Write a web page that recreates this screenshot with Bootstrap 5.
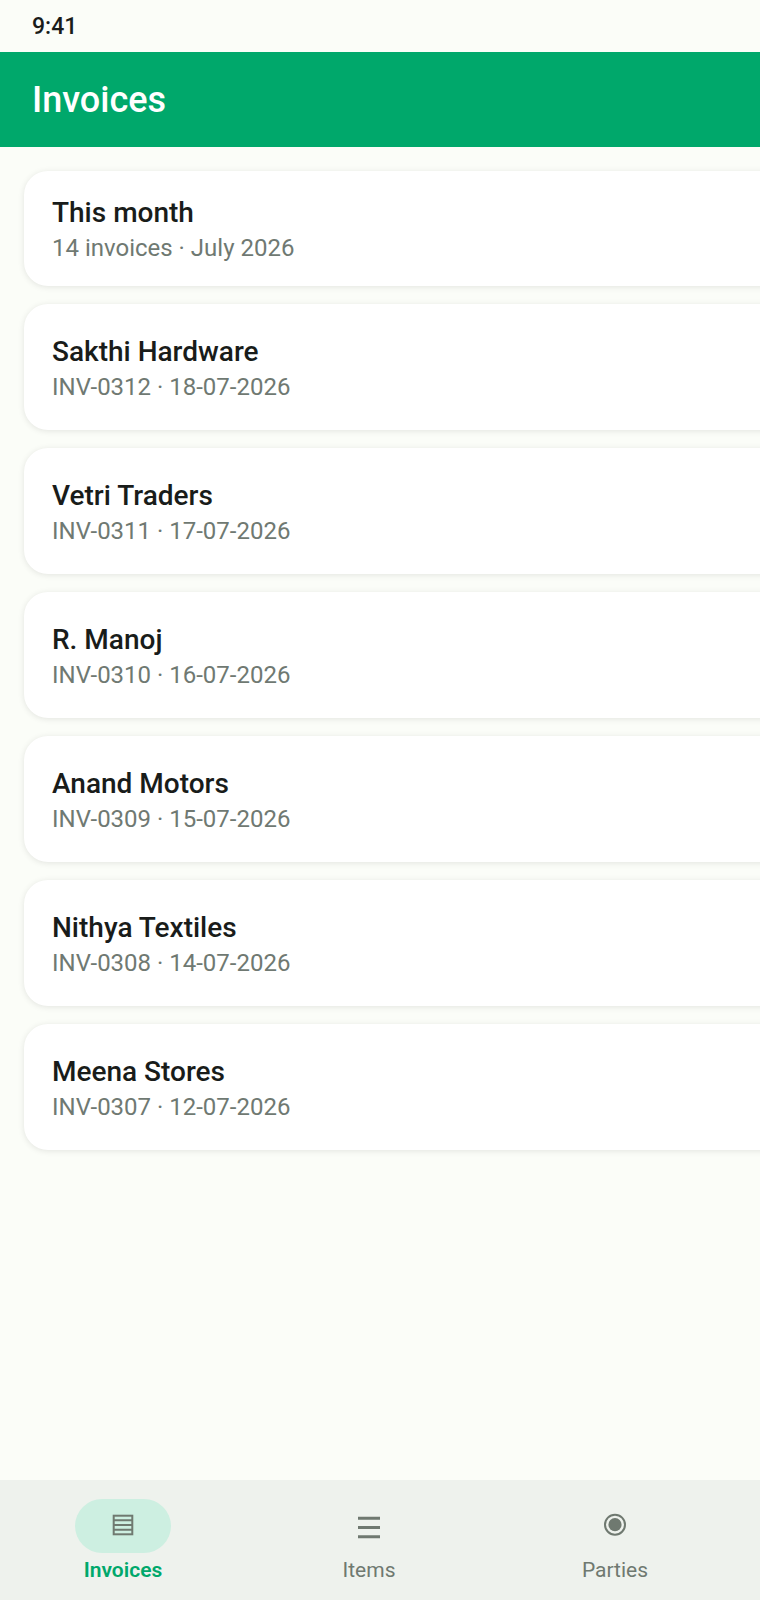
<!DOCTYPE html>
<html lang="en">
<head>
<meta charset="utf-8">
<title>Invoices</title>
<link rel="stylesheet" href="https://cdn.jsdelivr.net/npm/bootstrap@5.3.0/dist/css/bootstrap.min.css">
<style>
html,body{height:100%;}
body{background:#fbfdf8;font-family:Roboto,sans-serif;width:760px;overflow:hidden;}
.app-shell{height:1600px;width:760px;}
.status-strip{height:52px;padding-left:32px;padding-top:2px;font-size:23px;font-weight:500;color:#191c1a;}
.top-strip{height:95px;padding-left:32px;padding-top:1px;background:#00a86b;color:#fff;font-size:36px;font-weight:500;}
.scroll-area{padding:24px 0 0 24px;gap:18px;overflow:hidden;}
.inv-card{width:760px;flex:none;height:126px;padding:30px 28px 0;background:#fff;border-radius:24px;box-shadow:0 1px 6px rgba(0,0,0,.1);}
.inv-card.first{height:115px;padding-top:24px;}
.inv-title{font-size:28px;font-weight:500;color:#191c1a;line-height:35px;}
.inv-sub{font-size:24px;color:#6f7972;line-height:36px;}
.bottom-strip{height:120px;background:#eef2ed;padding-top:19px;}
.tab-cell{width:246px;}
.tab-pill{width:96px;height:54px;border-radius:27px;color:#6f7970;}
.tab-pill.on{background:#cdefe1;}
.tab-text{font-size:21px;color:#6f7970;margin-top:3px;line-height:28px;}
.tab-text.on{color:#00a86b;font-weight:600;}
</style>
</head>
<body>
<div class="app-shell d-flex flex-column">
  <div class="status-strip d-flex align-items-center">9:41</div>
  <div class="top-strip d-flex align-items-center">Invoices</div>
  <div class="scroll-area flex-grow-1 d-flex flex-column">
    <div class="inv-card first"><div class="inv-title">This month</div><div class="inv-sub">14 invoices · July 2026</div></div>
    <div class="inv-card"><div class="inv-title">Sakthi Hardware</div><div class="inv-sub">INV-0312 · 18-07-2026</div></div>
    <div class="inv-card"><div class="inv-title">Vetri Traders</div><div class="inv-sub">INV-0311 · 17-07-2026</div></div>
    <div class="inv-card"><div class="inv-title">R. Manoj</div><div class="inv-sub">INV-0310 · 16-07-2026</div></div>
    <div class="inv-card"><div class="inv-title">Anand Motors</div><div class="inv-sub">INV-0309 · 15-07-2026</div></div>
    <div class="inv-card"><div class="inv-title">Nithya Textiles</div><div class="inv-sub">INV-0308 · 14-07-2026</div></div>
    <div class="inv-card"><div class="inv-title">Meena Stores</div><div class="inv-sub">INV-0307 · 12-07-2026</div></div>
  </div>
  <div class="bottom-strip d-flex">
    <div class="tab-cell d-flex flex-column align-items-center">
      <div class="tab-pill on d-flex align-items-center justify-content-center">
        <svg width="26" height="26" viewBox="0 0 26 26" fill="none" stroke="currentColor" stroke-width="2"><rect x="3.7" y="2.7" width="18.6" height="18.6"/><path d="M3.7 7.3h18.6M3.7 12h18.6M3.7 16.7h18.6"/></svg>
      </div>
      <div class="tab-text on">Invoices</div>
    </div>
    <div class="tab-cell d-flex flex-column align-items-center">
      <div class="tab-pill d-flex align-items-center justify-content-center">
        <svg width="26" height="26" viewBox="0 0 26 26" fill="none" stroke="currentColor" stroke-width="3"><path d="M2 5.2h22M2 14.5h22M2 23.8h22"/></svg>
      </div>
      <div class="tab-text">Items</div>
    </div>
    <div class="tab-cell d-flex flex-column align-items-center">
      <div class="tab-pill d-flex align-items-center justify-content-center">
        <svg width="26" height="26" viewBox="0 0 26 26" fill="none" stroke="currentColor" stroke-width="2"><circle cx="13" cy="11.7" r="10"/><circle cx="13" cy="11.7" r="6.6" fill="currentColor" stroke="none"/></svg>
      </div>
      <div class="tab-text">Parties</div>
    </div>
  </div>
</div>
<script src="https://cdn.jsdelivr.net/npm/bootstrap@5.3.0/dist/js/bootstrap.bundle.min.js"></script>
</body>
</html>
